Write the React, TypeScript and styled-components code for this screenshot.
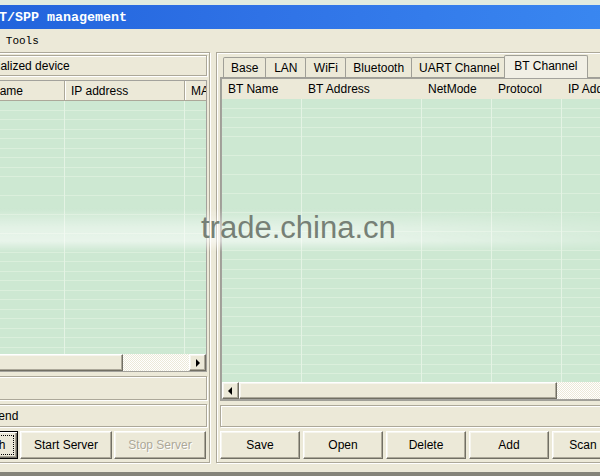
import styled, { createGlobalStyle, css } from 'styled-components'

const face = '#ece9d8'
const shade = '#aca899'
const darkShade = '#716f64'
const rowGreen = '#cde8d2'
const rowLine = '#dbefdc'
const colLine = '#e4f3e4'

const GlobalStyle = createGlobalStyle`
  html, body {
    margin: 0;
    padding: 0;
    background: ${face};
    overflow: hidden;
  }
  body {
    font-family: "Liberation Sans", Arial, sans-serif;
    font-size: 12px;
    color: #000;
  }
  * {
    box-sizing: border-box;
  }
`

const raised = css`
  background: ${face};
  border: 1px solid;
  border-color: #fff ${darkShade} ${darkShade} #fff;
  box-shadow: inset -1px -1px 0 ${shade}, inset 1px 1px 0 #f6f5ee;
`

const etched = css`
  border: 1px solid ${shade};
  box-shadow: 1px 1px 0 #fff, inset 1px 1px 0 #fff;
`

const Screen = styled.div`
  position: relative;
  width: 600px;
  height: 476px;
  overflow: hidden;
`

// window dragged partly past the left edge of the desktop
const Window = styled.div`
  width: 780px;
  height: 476px;
  margin-left: -90px;
  display: flex;
  flex-direction: column;
  background: ${face};
`

const DesktopEdge = styled.div`
  height: 5px;
  flex: none;
  background: #e1ebe0;
`

const TitleBar = styled.div`
  height: 24px;
  flex: none;
  padding-left: 65px;
  display: flex;
  align-items: center;
  background: linear-gradient(to right, #1d5fd9, #2f72e6 45%, #3c8cf3);
  color: #fff;
  font-family: "Liberation Mono", "Courier New", monospace;
  font-weight: bold;
  font-size: 13.33px;
`

const MenuBar = styled.div`
  height: 21px;
  flex: none;
  padding: 3px 0 0 13px;
  display: flex;
  align-items: center;
  font-family: "Liberation Mono", "Courier New", monospace;
  font-size: 11px;
`

const MenuItem = styled.span`
  padding: 0 6px;
`

const Panes = styled.div`
  display: flex;
  gap: 6px;
  height: 411px;
  flex: none;
  margin-top: 2px;
`

const WindowFooter = styled.div`
  flex: 1;
  border-bottom: 4px solid #85847a;
`

const Frame = styled.section<{ $width: number }>`
  width: ${p => p.$width}px;
  height: 100%;
  display: flex;
  flex-direction: column;
  gap: 4px;
  padding: 2px 2px 3px 3px;
  ${etched}
`

const LabelBox = styled.div<{ $height: number }>`
  height: ${p => p.$height}px;
  flex: none;
  padding-left: 12px;
  display: flex;
  align-items: center;
  white-space: nowrap;
  overflow: hidden;
  ${etched}
`

const EmptyBox = styled.div<{ $height: number }>`
  height: ${p => p.$height}px;
  flex: none;
  ${etched}
`

const ListView = styled.div<{ $height?: number }>`
  ${p => (p.$height ? `height: ${p.$height}px; flex: none;` : 'flex: 1;')}
  display: flex;
  flex-direction: column;
  border: 1px solid #a3a29c;
  overflow: hidden;
  min-width: 0;
`

const HeaderRow = styled.div<{ $flat?: boolean }>`
  display: flex;
  height: 20px;
  flex: none;
  background: ${face};
  ${p => !p.$flat && css`border-bottom: 1px solid ${shade};`}
`

const HeaderCell = styled.div<{ $width: number; $flat?: boolean }>`
  flex: 0 0 ${p => p.$width}px;
  padding-left: 6px;
  display: flex;
  align-items: center;
  white-space: nowrap;
  overflow: hidden;
  ${p =>
    !p.$flat &&
    css`
      border-right: 1px solid ${shade};
      box-shadow: inset 1px 0 0 #fff;
    `}
`

const GridBody = styled.div`
  flex: 1;
  display: flex;
  background: repeating-linear-gradient(
    to bottom,
    ${rowGreen} 0 8.5px,
    ${rowLine} 8.5px 9.5px
  );
`

const GridColumn = styled.div<{ $width: number }>`
  flex: 0 0 ${p => p.$width}px;
  border-right: 1px solid ${colLine};
`

const HScroll = styled.div`
  height: 17px;
  flex: none;
  display: flex;
`

const ScrollArrow = styled.div<{ $dir: 'left' | 'right' }>`
  width: 17px;
  flex: none;
  display: flex;
  align-items: center;
  justify-content: center;
  ${raised}

  &::after {
    content: '';
    border-top: 4px solid transparent;
    border-bottom: 4px solid transparent;
    ${p =>
      p.$dir === 'left'
        ? 'border-right: 4px solid #000; margin-left: -1px;'
        : 'border-left: 4px solid #000; margin-left: 1px;'}
  }
`

const Thumb = styled.div<{ $width: number }>`
  flex: 0 0 ${p => p.$width}px;
  ${raised}
`

const Track = styled.div`
  flex: 1;
  background-color: #fff;
  background-image: conic-gradient(${face} 25%, #fff 0 50%, ${face} 0 75%, #fff 0);
  background-size: 2px 2px;
`

const ButtonRow = styled.div<{ $align: 'start' | 'end'; $gap: number }>`
  height: 28px;
  flex: none;
  display: flex;
  gap: ${p => p.$gap}px;
  justify-content: ${p => (p.$align === 'end' ? 'flex-end' : 'flex-start')};
  padding-right: ${p => (p.$align === 'end' ? 1 : 0)}px;
`

const Button = styled.button<{ $width: number; $focused?: boolean }>`
  position: relative;
  width: ${p => p.$width}px;
  height: 28px;
  flex: none;
  padding: 0;
  font-family: "Liberation Sans", Arial, sans-serif;
  font-size: 12px;
  color: #000;
  white-space: nowrap;
  ${raised}

  &:disabled {
    color: ${shade};
    text-shadow: 1px 1px 0 #fff;
  }

  ${p =>
    p.$focused &&
    css`
      border-color: #000;
      box-shadow: inset 1px 1px 0 #fff, inset -1px -1px 0 ${darkShade},
        inset -2px -2px 0 ${shade};

      &::after {
        content: '';
        position: absolute;
        inset: 3px;
        border: 1px dotted #000;
      }
    `}
`

const TabControl = styled.div`
  height: 346px;
  flex: none;
  display: flex;
  flex-direction: column;
`

const TabStrip = styled.div`
  height: 22px;
  flex: none;
  display: flex;
  align-items: flex-end;
  padding-left: 3px;
  position: relative;
  z-index: 1;
`

const Tab = styled.div<{ $active?: boolean }>`
  height: 20px;
  min-width: 41px;
  padding: 0 7px;
  display: flex;
  align-items: center;
  justify-content: center;
  white-space: nowrap;
  background: ${face};
  border: 1px solid #a09f97;
  border-bottom: none;
  border-radius: 2px 2px 0 0;
  margin-right: -1px;

  ${p =>
    p.$active &&
    css`
      height: 23px;
      margin: 0 -1px -1px -2px;
      padding: 0 9px 3px;
      background: #f1efe5;
      position: relative;
      z-index: 2;
    `}
`

const TabPage = styled.div`
  flex: 1;
  display: flex;
  border: 1px solid #a09f97;
  background: ${face};
  min-width: 0;
`

const WatermarkBand = styled.div`
  position: absolute;
  left: 0;
  right: 0;
  top: 208px;
  height: 44px;
  pointer-events: none;
  background: linear-gradient(
    to bottom,
    rgba(255, 255, 255, 0),
    rgba(255, 255, 255, 0.45) 45%,
    rgba(255, 255, 255, 0.55) 75%,
    rgba(255, 255, 255, 0)
  );
  mask-image: linear-gradient(to right, #000 60%, rgba(0, 0, 0, 0.4));
`

const WatermarkText = styled.div`
  position: absolute;
  left: 201px;
  top: 212px;
  font-family: "Liberation Sans", Arial, sans-serif;
  font-size: 31px;
  line-height: 31px;
  color: #768076;
  pointer-events: none;
`

type Column = { title: string; width: number }

const deviceColumns: Column[] = [
  { title: 'No.', width: 70 },
  { title: 'Name', width: 80 },
  { title: 'IP address', width: 120 },
  { title: 'MAC address', width: 120 },
]

const channelColumns: Column[] = [
  { title: 'BT Name', width: 80 },
  { title: 'BT Address', width: 120 },
  { title: 'NetMode', width: 70 },
  { title: 'Protocol', width: 70 },
  { title: 'IP Address', width: 120 },
]

const tabs = ['Base', 'LAN', 'WiFi', 'Bluetooth', 'UART Channel', 'BT Channel']
const activeTab = 'BT Channel'

const Grid = ({
  columns,
  flat,
  height,
  thumbWidth,
}: {
  columns: Column[]
  flat?: boolean
  height?: number
  thumbWidth: number
}) => (
  <ListView $height={height}>
    <HeaderRow $flat={flat}>
      {columns.map(c => (
        <HeaderCell key={c.title} $width={c.width} $flat={flat}>
          {c.title}
        </HeaderCell>
      ))}
    </HeaderRow>
    <GridBody>
      {columns.map(c => (
        <GridColumn key={c.title} $width={c.width} />
      ))}
    </GridBody>
    <HScroll>
      <ScrollArrow $dir="left" />
      <Thumb $width={thumbWidth} />
      <Track />
      <ScrollArrow $dir="right" />
    </HScroll>
  </ListView>
)

export default function App() {
  return (
    <>
      <GlobalStyle />
      <Screen>
        <Window>
          <DesktopEdge />
          <TitleBar>UART/SPP management</TitleBar>
          <MenuBar>
            <MenuItem>File</MenuItem>
            <MenuItem>Edit</MenuItem>
            <MenuItem>Tools</MenuItem>
          </MenuBar>

          <Panes>
            <Frame $width={300}>
              <LabelBox $height={21}>Searched Initialized device</LabelBox>
              <Grid columns={deviceColumns} height={292} thumbWidth={191} />
              <EmptyBox $height={24} />
              <LabelBox $height={23}>Message to send</LabelBox>
              <ButtonRow $align="end" $gap={2}>
                <Button $width={92} $focused>
                  Start Search
                </Button>
                <Button $width={92}>Start Server</Button>
                <Button $width={92} disabled>
                  Stop Server
                </Button>
              </ButtonRow>
            </Frame>

            <Frame $width={460}>
              <TabControl>
                <TabStrip>
                  {tabs.map(t => (
                    <Tab key={t} $active={t === activeTab}>
                      {t}
                    </Tab>
                  ))}
                </TabStrip>
                <TabPage>
                  <Grid columns={channelColumns} flat thumbWidth={318} />
                </TabPage>
              </TabControl>
              <EmptyBox $height={22} />
              <ButtonRow $align="start" $gap={3}>
                <Button $width={80}>Save</Button>
                <Button $width={80}>Open</Button>
                <Button $width={80}>Delete</Button>
                <Button $width={80}>Add</Button>
                <Button $width={62}>Scan</Button>
              </ButtonRow>
            </Frame>
          </Panes>
          <WindowFooter />
        </Window>

        <WatermarkBand />
        <WatermarkText>trade.china.cn</WatermarkText>
      </Screen>
    </>
  )
}
